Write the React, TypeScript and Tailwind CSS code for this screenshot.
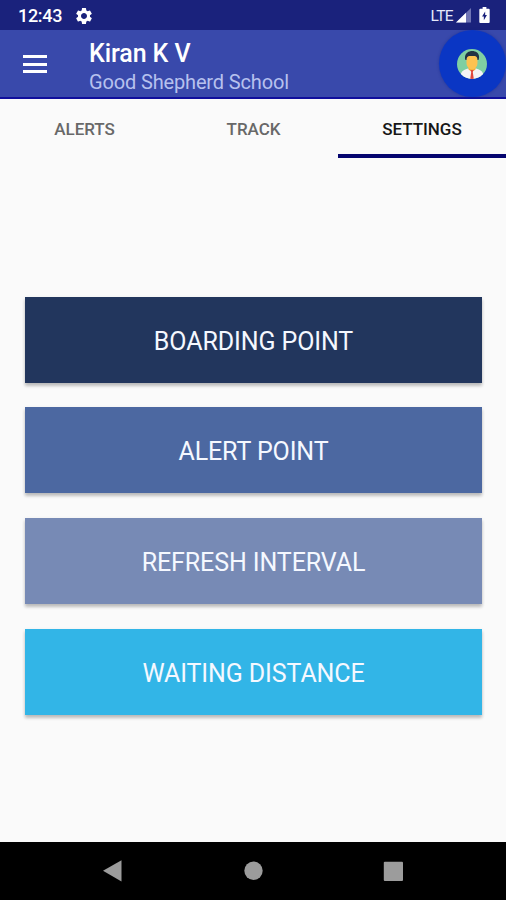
import React from 'react';
import { MdSettings } from 'react-icons/md';

function StatusBar() {
  return (
    <div className="flex h-[30px] items-center bg-[#1a227c] pl-[18px] pr-[16px] text-white">
      <span className="w-[44px] whitespace-nowrap pt-[2px] text-[18px] font-medium leading-[30px] tracking-[-0.3px]">12:43</span>
      <MdSettings className="ml-[12px] mt-px size-[20px]" />
      <span className="ml-auto mr-[3px] pt-px text-[15.500px] leading-[30px] tracking-[-0.6px] text-[#e6e8fa]">LTE</span>
      <svg className="mr-[8px] h-[16px] w-[15px]" viewBox="0 0 15 16">
        <path d="M15 1V15.5H0z" fill="#6f74b4" />
        <path d="M10 5.8V15.5H0z" fill="#fff" />
      </svg>
      <svg className="h-[16px] w-[11px]" viewBox="0 0 11 17">
        <path d="M3.5 0h4v1.8H10a1 1 0 0 1 1 1V16a1 1 0 0 1-1 1H1a1 1 0 0 1-1-1V2.8a1 1 0 0 1 1-1h2.5z" fill="#fff" />
        <path d="M6.2 4.8v3.600h1.900L4.8 14v-3.900H2.900z" fill="#1a227c" />
      </svg>
    </div>
  );
}

function Avatar() {
  return (
    <div className="mr-[0.5px] flex size-[67px] items-center justify-center rounded-full bg-[#0a36c4] shadow-[0_0_3px_rgba(10,30,130,0.45)]">
      <svg className="size-[30px]" viewBox="0 0 30 30">
        <defs>
          <clipPath id="face"><circle cx="15" cy="15" r="15" /></clipPath>
        </defs>
        <g clipPath="url(#face)">
          <rect width="30" height="30" fill="#7fcfa2" />
          <path d="M4 30V24.500c1-3 4-4 7-5h8c3 1 6 2 7 5V30z" fill="#f4f3f5" />
          <path d="M11.500 16h7v4.500L15 23l-3.500-2.500z" fill="#f0ad38" />
          <path d="M9.500 7h11v7c0 3.500-2.500 6.500-5.500 6.500s-5.500-3-5.500-6.500z" fill="#fcc250" />
          <path d="M8.500 11C7.500 9 8 5 10.500 3.500C13 1.500 17.500 1.500 20 3.500c2.500 2 2.500 5.500 1.500 7.500h-1c0-2.500-1-3.500-2.500-4h-6c-1.500.5-2.500 1.500-2.500 4z" fill="#203244" />
          <path d="M13.500 21h3l-.7 2 1 7h-3.600l1-7z" fill="#e0483e" />
        </g>
      </svg>
    </div>
  );
}

function Header() {
  return (
    <header className="flex h-[69px] border-b-2 border-[#100f9c] bg-[#3949ab] pl-[23px]">
      <div className="mt-[25px] flex h-[18px] w-[24px] flex-col justify-between">
        <span className="h-[3px] bg-white" />
        <span className="h-[3px] bg-white" />
        <span className="h-[3px] bg-white" />
      </div>
      <div className="ml-[42px] flex-1 whitespace-nowrap pt-[8px]">
        <h1 className="text-[25px] font-medium leading-[31px] tracking-[-0.1px] text-white">Kiran K V</h1>
        <p className="text-[20px] leading-[27px] tracking-[-0.15px] text-[#b7c1ee]">Good Shepherd School</p>
      </div>
      <Avatar />
    </header>
  );
}

const buttons = [
  { label: 'BOARDING POINT', color: 'bg-[#22365d]' },
  { label: 'ALERT POINT', color: 'bg-[#4c68a1]' },
  { label: 'REFRESH INTERVAL', color: 'bg-[#778ab5]' },
  { label: 'WAITING DISTANCE', color: 'bg-[#32b5e7]' },
];

export default function App() {
  return (
    <div className="flex h-[900px] w-[506px] flex-col overflow-hidden bg-[#fafafa] font-[Roboto,sans-serif]">
      <StatusBar />
      <Header />
      <nav className="grid h-[59px] grid-cols-[169px_169px_168px] text-center text-[17px] font-medium leading-[60px] tracking-[-0.05px] text-[#686868]">
        <span>ALERTS</span>
        <span>TRACK</span>
        <span className="h-[58.500px] border-b-[4px] border-[#05056f] text-[#171717]">SETTINGS</span>
      </nav>
      <main className="flex flex-1 flex-col gap-[24.700px] pl-[25px] pr-[24px] pt-[138.700px]">
        {buttons.map(({ label, color }) => (
          <button
            key={label}
            className={`h-[86px] shrink-0 pt-[3.700px] text-[25px] leading-[30px] tracking-[-0.1px] text-[#f5f8ff] shadow-[0_3px_3px_rgba(0,0,0,0.22),0_1px_4px_rgba(0,0,0,0.08)] ${color}`}
          >
            {label}
          </button>
        ))}
      </main>
      <footer className="flex h-[58px] bg-black">
        <svg className="h-[58px] w-[506px]" viewBox="0 0 506 58" fill="#9c9c9c">
          <path d="M103 28.700L121.500 18.300V39.500z" />
          <circle cx="253.500" cy="28.700" r="9.200" />
          <rect x="383.800" y="19.700" width="19.200" height="19.200" rx="1" />
        </svg>
      </footer>
    </div>
  );
}
